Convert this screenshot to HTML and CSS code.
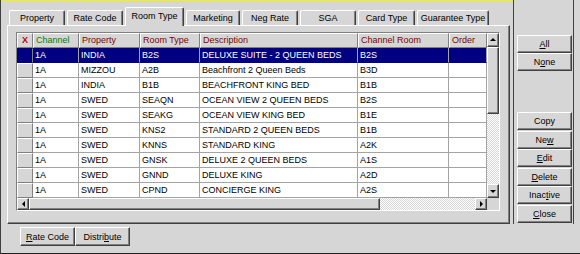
FILE: index.html
```html
<!DOCTYPE html>
<html lang="en">

<head>
    <meta charset="UTF-8">
    <title>Room Type</title>
    <link rel="stylesheet" href="styles.css">
</head>

<body>
    <div class="window">
        <div class="main">
            <div class="tabs">
                <div class="tab tab-property">Property</div>
                <div class="tab tab-rate">Rate Code</div>
                <div class="tab tab-room active">Room Type</div>
                <div class="tab tab-marketing">Marketing</div>
                <div class="tab tab-neg">Neg Rate</div>
                <div class="tab tab-sga">SGA</div>
                <div class="tab tab-card">Card Type</div>
                <div class="tab tab-guarantee">Guarantee Type</div>
            </div>
            <div class="tab-panel">
                <div class="grid">
                    <div class="grid-top">
                        <div class="table">
                            <div class="row head">
                                <div class="cell rowhead x">X</div>
                                <div class="cell green">Channel</div>
                                <div class="cell">Property</div>
                                <div class="cell">Room Type</div>
                                <div class="cell">Description</div>
                                <div class="cell">Channel Room</div>
                                <div class="cell">Order</div>
                            </div>
                            <div class="row selected">
                                <div class="cell rowhead"></div>
                                <div class="cell">1A</div>
                                <div class="cell">INDIA</div>
                                <div class="cell">B2S</div>
                                <div class="cell">DELUXE SUITE - 2 QUEEN BEDS</div>
                                <div class="cell">B2S</div>
                                <div class="cell"></div>
                            </div>
                            <div class="row">
                                <div class="cell rowhead"></div>
                                <div class="cell">1A</div>
                                <div class="cell">MIZZOU</div>
                                <div class="cell">A2B</div>
                                <div class="cell">Beachfront 2 Queen Beds</div>
                                <div class="cell">B3D</div>
                                <div class="cell"></div>
                            </div>
                            <div class="row">
                                <div class="cell rowhead"></div>
                                <div class="cell">1A</div>
                                <div class="cell">INDIA</div>
                                <div class="cell">B1B</div>
                                <div class="cell">BEACHFRONT KING BED</div>
                                <div class="cell">B1B</div>
                                <div class="cell"></div>
                            </div>
                            <div class="row">
                                <div class="cell rowhead"></div>
                                <div class="cell">1A</div>
                                <div class="cell">SWED</div>
                                <div class="cell">SEAQN</div>
                                <div class="cell">OCEAN VIEW 2 QUEEN BEDS</div>
                                <div class="cell">B2S</div>
                                <div class="cell"></div>
                            </div>
                            <div class="row">
                                <div class="cell rowhead"></div>
                                <div class="cell">1A</div>
                                <div class="cell">SWED</div>
                                <div class="cell">SEAKG</div>
                                <div class="cell">OCEAN VIEW KING BED</div>
                                <div class="cell">B1E</div>
                                <div class="cell"></div>
                            </div>
                            <div class="row">
                                <div class="cell rowhead"></div>
                                <div class="cell">1A</div>
                                <div class="cell">SWED</div>
                                <div class="cell">KNS2</div>
                                <div class="cell">STANDARD 2 QUEEN BEDS</div>
                                <div class="cell">B1B</div>
                                <div class="cell"></div>
                            </div>
                            <div class="row">
                                <div class="cell rowhead"></div>
                                <div class="cell">1A</div>
                                <div class="cell">SWED</div>
                                <div class="cell">KNNS</div>
                                <div class="cell">STANDARD KING</div>
                                <div class="cell">A2K</div>
                                <div class="cell"></div>
                            </div>
                            <div class="row">
                                <div class="cell rowhead"></div>
                                <div class="cell">1A</div>
                                <div class="cell">SWED</div>
                                <div class="cell">GNSK</div>
                                <div class="cell">DELUXE 2 QUEEN BEDS</div>
                                <div class="cell">A1S</div>
                                <div class="cell"></div>
                            </div>
                            <div class="row">
                                <div class="cell rowhead"></div>
                                <div class="cell">1A</div>
                                <div class="cell">SWED</div>
                                <div class="cell">GNND</div>
                                <div class="cell">DELUXE KING</div>
                                <div class="cell">A2D</div>
                                <div class="cell"></div>
                            </div>
                            <div class="row">
                                <div class="cell rowhead"></div>
                                <div class="cell">1A</div>
                                <div class="cell">SWED</div>
                                <div class="cell">CPND</div>
                                <div class="cell">CONCIERGE KING</div>
                                <div class="cell">A2S</div>
                                <div class="cell"></div>
                            </div>
                        </div>
                        <div class="vscroll">
                            <div class="sbtn"><span class="arrow up"></span></div>
                            <div class="vthumb"></div>
                            <div class="track"></div>
                            <div class="sbtn"><span class="arrow down"></span></div>
                        </div>
                    </div>
                    <div class="hscroll">
                        <div class="sbtn"><span class="arrow left"></span></div>
                        <div class="hthumb"></div>
                        <div class="track"></div>
                        <div class="sbtn"><span class="arrow right"></span></div>
                        <div class="corner"></div>
                    </div>
                </div>
            </div>
            <div class="bottom-buttons">
                <button class="btn"><u>R</u>ate Code</button>
                <button class="btn">Distri<u>b</u>ute</button>
            </div>
        </div>
        <div class="side">
            <div class="btn-group">
                <button class="btn"><u>A</u>ll</button>
                <button class="btn">N<u>o</u>ne</button>
            </div>
            <div class="btn-group actions">
                <button class="btn">Copy</button>
                <button class="btn">Ne<u>w</u></button>
                <button class="btn"><u>E</u>dit</button>
                <button class="btn"><u>D</u>elete</button>
                <button class="btn">Inac<u>t</u>ive</button>
                <button class="btn"><u>C</u>lose</button>
            </div>
        </div>
    </div>
</body>

</html>
```

FILE: styles.css
```css
body {
    margin: 0;
    background-color: #d6d6d6;
    font-family: "Liberation Sans", Arial, sans-serif;
    font-size: 9px;
    color: #000;
}

.window {
    display: flex;
    width: 580px;
    height: 254px;
    box-sizing: border-box;
    border-left: 1px solid #404040;
    border-bottom: 1px solid #202020;
}

.main {
    width: 512px;
    box-sizing: border-box;
    border-top: 1px solid #f4f400;
    padding: 5px 0 0 6px;
}

/* tabs */
.tabs {
    display: flex;
    align-items: flex-end;
    gap: 2px;
    height: 19px;
    padding-left: 2px;
    position: relative;
    z-index: 1;
}

.tab {
    height: 15px;
    box-sizing: border-box;
    border-top: 1px solid #fff;
    border-left: 1px solid #fff;
    border-right: 1px solid #404040;
    box-shadow: inset -1px 0 #808080;
    border-radius: 2px 2px 0 0;
    text-align: center;
    line-height: 15px;
}

.tab.active {
    height: 19px;
    margin-bottom: -1px;
    background-color: #d6d6d6;
    line-height: 17px;
}

.tab-property { width: 56px; }
.tab-rate { width: 56px; }
.tab-room { width: 59px; }
.tab-marketing { width: 54px; }
.tab-neg { width: 56px; }
.tab-sga { width: 56px; }
.tab-card { width: 57px; }
.tab-guarantee { width: 72px; }

.tab-panel {
    width: 503px;
    height: 199px;
    box-sizing: border-box;
    border-top: 1px solid #fff;
    border-left: 1px solid #fff;
    border-right: 1px solid #404040;
    border-bottom: 1px solid #404040;
    box-shadow: inset -1px -1px #808080;
    padding: 6px 0 0 8px;
}

/* grid */
.grid {
    width: 484px;
    box-sizing: border-box;
    border: 1px solid #808080;
    border-right-color: #fff;
    border-bottom-color: #fff;
}

.grid-top {
    display: flex;
}

.table {
    width: 470px;
    background-color: #fff;
}

.row {
    display: grid;
    grid-template-columns: 16px 46px 61px 60px 158px 91px 38px;
    height: 15px;
}

.cell {
    box-sizing: border-box;
    border-right: 1px solid #a4a4a4;
    border-bottom: 1px solid #a4a4a4;
    padding-left: 2px;
    line-height: 14px;
    white-space: nowrap;
    overflow: hidden;
}

.rowhead {
    background-color: #d6d6d6;
    border-top: 1px solid #fff;
    border-left: 1px solid #fff;
    border-right-color: #808080;
    border-bottom-color: #808080;
}

.head .cell {
    background-color: #d6d6d6;
    color: #800000;
    border-left: 1px solid #fff;
    border-top: 1px solid #fff;
    border-right-color: #808080;
    border-bottom-color: #808080;
    line-height: 13px;
}

.head .green {
    color: #008000;
}

.head .x {
    color: #c00000;
    font-weight: bold;
    text-align: center;
    padding: 0;
}

.selected .cell {
    background-color: #000080;
    color: #fff;
    border-color: #000080;
    border-right-color: #a4a4a4;
}

.selected .rowhead {
    border-right-color: #808080;
}

/* scrollbars */
.vscroll {
    width: 12px;
    height: 165px;
    display: flex;
    flex-direction: column;
}

.sbtn {
    width: 12px;
    height: 14px;
    box-sizing: border-box;
    background-color: #d6d6d6;
    border: 1px solid;
    border-color: #fff #404040 #404040 #fff;
    box-shadow: inset -1px -1px #808080;
    display: flex;
    justify-content: center;
    align-items: center;
}

.hscroll .sbtn {
    height: 12px;
}

.vthumb {
    height: 67px;
    box-sizing: border-box;
    background-color: #d6d6d6;
    border: 1px solid;
    border-color: #fff #404040 #404040 #fff;
    box-shadow: inset -1px -1px #808080;
}

.track {
    flex: 1;
    background: repeating-conic-gradient(#fff 0 25%, #d6d6d6 0 50%) 0 0 / 2px 2px;
}

.hscroll {
    display: flex;
    height: 12px;
}

.hthumb {
    width: 351px;
    box-sizing: border-box;
    background-color: #d6d6d6;
    border: 1px solid;
    border-color: #fff #404040 #404040 #fff;
    box-shadow: inset -1px -1px #808080;
}

.corner {
    width: 12px;
    background-color: #d6d6d6;
}

.arrow {
    width: 0;
    height: 0;
    border: 3px solid transparent;
}

.arrow.up {
    border-bottom-color: #000;
    border-top-width: 0;
    margin-top: -1px;
}

.arrow.down {
    border-top-color: #000;
    border-bottom-width: 0;
}

.arrow.left {
    border-right-color: #000;
    border-left-width: 0;
}

.arrow.right {
    border-left-color: #000;
    border-right-width: 0;
}

/* buttons */
.btn {
    display: block;
    width: 55px;
    height: 18px;
    padding: 0;
    box-sizing: border-box;
    background-color: #d6d6d6;
    border: 1px solid;
    border-color: #fff #404040 #404040 #fff;
    box-shadow: inset -1px -1px #808080;
    font-family: "Liberation Sans", Arial, sans-serif;
    font-size: 9px;
    color: #000;
    text-align: center;
}

.bottom-buttons {
    display: flex;
    margin: 3px 0 0 13px;
}

.bottom-buttons .btn {
    height: 19px;
}

.side {
    width: 61px;
    height: 224px;
    box-sizing: border-box;
    border-left: 1px solid #404040;
    border-right: 1px solid #404040;
    padding: 35px 0 0 3px;
}

.btn-group {
    display: flex;
    flex-direction: column;
}

.actions {
    margin-top: 41px;
    gap: 0.6px;
}
```
